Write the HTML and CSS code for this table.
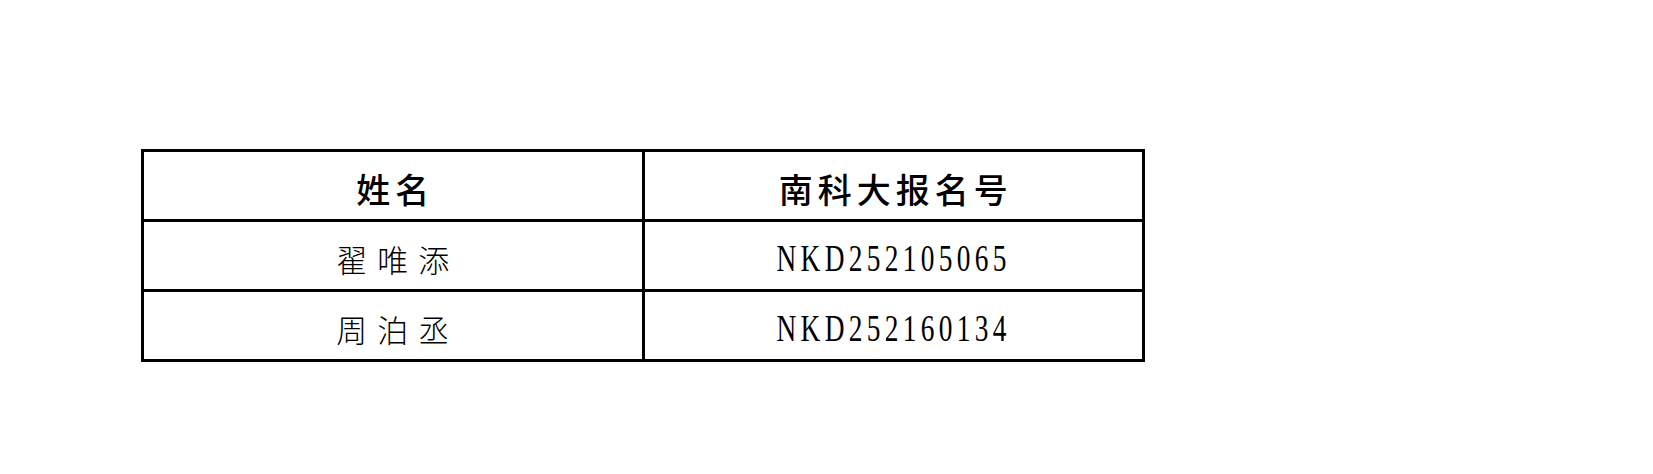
FILE: index.html
```html
<!DOCTYPE html>
<html lang="zh">
<head>
<meta charset="utf-8">
<link rel="stylesheet" href="styles.css">
</head>
<body>
<div class="page">
  <table class="list">
    <thead>
      <tr><th>姓名</th><th>南科大报名号</th></tr>
    </thead>
    <tbody>
      <tr><td class="name">翟唯添</td><td class="code"><span>NKD252105065</span></td></tr>
      <tr><td class="name">周泊丞</td><td class="code"><span>NKD252160134</span></td></tr>
    </tbody>
  </table>
</div>
</body>
</html>
```
FILE: styles.css
```css
html, body {
  margin: 0;
  padding: 0;
  background: #fff;
}
.page {
  padding: 149px 0 0 141px;
}
.list {
  border-collapse: collapse;
  width: 1004px;
  table-layout: fixed;
}
.list th, .list td {
  border: 3px solid #000;
  text-align: center;
  padding: 5px 0 0 0;
  color: #000;
  vertical-align: middle;
}
.list th {
  height: 62px;
  font-family: "Noto Sans CJK SC", sans-serif;
  font-weight: 500;
  font-size: 34px;
  letter-spacing: 5px;
  text-indent: 5px;
}
.list td {
  height: 62px;
}
.name {
  font-family: "Noto Sans CJK SC", sans-serif;
  font-weight: 300;
  font-size: 31px;
  letter-spacing: 10px;
  text-indent: 10px;
}
.code span {
  display: inline-block;
  font-family: "Liberation Serif", serif;
  font-size: 38px;
  letter-spacing: 6px;
  transform: scaleX(0.72);
}
```
